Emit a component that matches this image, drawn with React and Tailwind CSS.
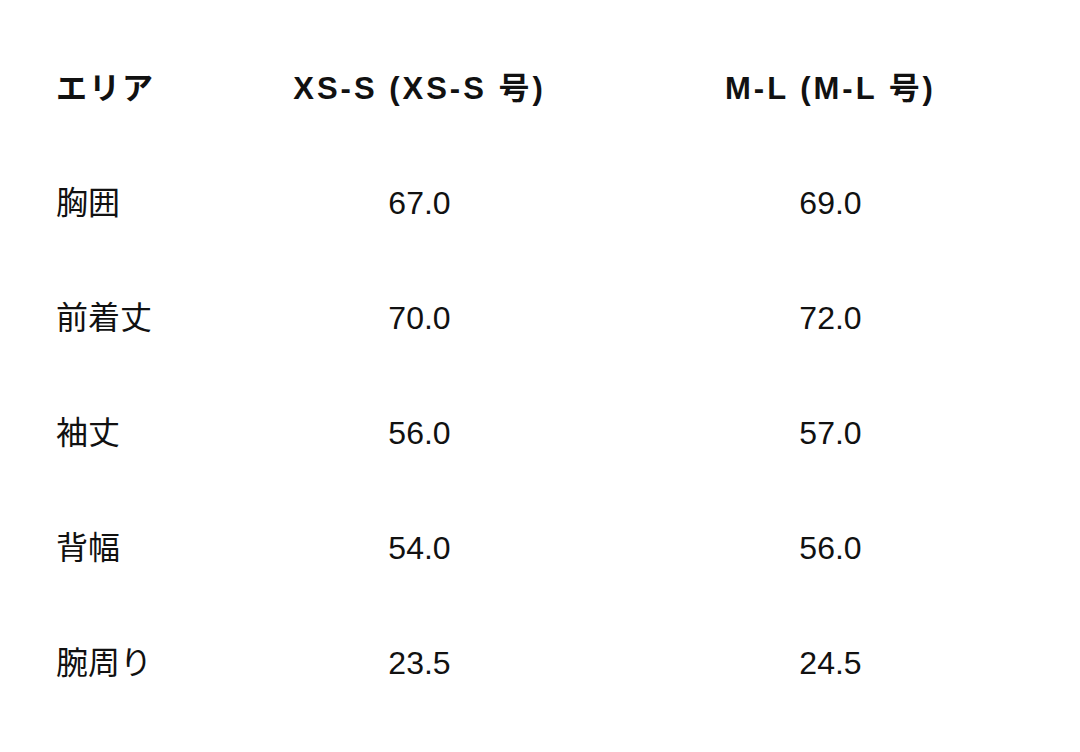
import React from 'react';

const rows = [
  { area: '胸囲', s: '67.0', m: '69.0' },
  { area: '前着丈', s: '70.0', m: '72.0' },
  { area: '袖丈', s: '56.0', m: '57.0' },
  { area: '背幅', s: '54.0', m: '56.0' },
  { area: '腕周り', s: '23.5', m: '24.5' },
];

export default function App() {
  return (
    <div
      className="w-[1080px] h-[752px] bg-white text-[#111] pt-[33px] pl-[56px]"
      style={{ fontFamily: '"Liberation Sans", "Noto Sans CJK JP", sans-serif' }}
    >
      <div className="grid grid-cols-[158px_411px_411px]">
        {/* header */}
        <div className="h-[112px] flex items-center">
          <span className="text-[31px] font-bold tracking-[2px]">エリア</span>
        </div>
        <div className="h-[112px] flex items-center justify-center">
          <span className="text-[31px] font-bold tracking-[3px]">XS-S (XS-S 号)</span>
        </div>
        <div className="h-[112px] flex items-center justify-center">
          <span className="text-[31px] font-bold tracking-[3px]">M-L (M-L 号)</span>
        </div>

        {rows.map((r) => (
          <React.Fragment key={r.area}>
            <div className="h-[115px] flex items-center">
              <span className="text-[32px]">{r.area}</span>
            </div>
            <div className="h-[115px] flex items-center justify-center">
              <span className="text-[32px]">{r.s}</span>
            </div>
            <div className="h-[115px] flex items-center justify-center">
              <span className="text-[32px]">{r.m}</span>
            </div>
          </React.Fragment>
        ))}
      </div>
    </div>
  );
}
